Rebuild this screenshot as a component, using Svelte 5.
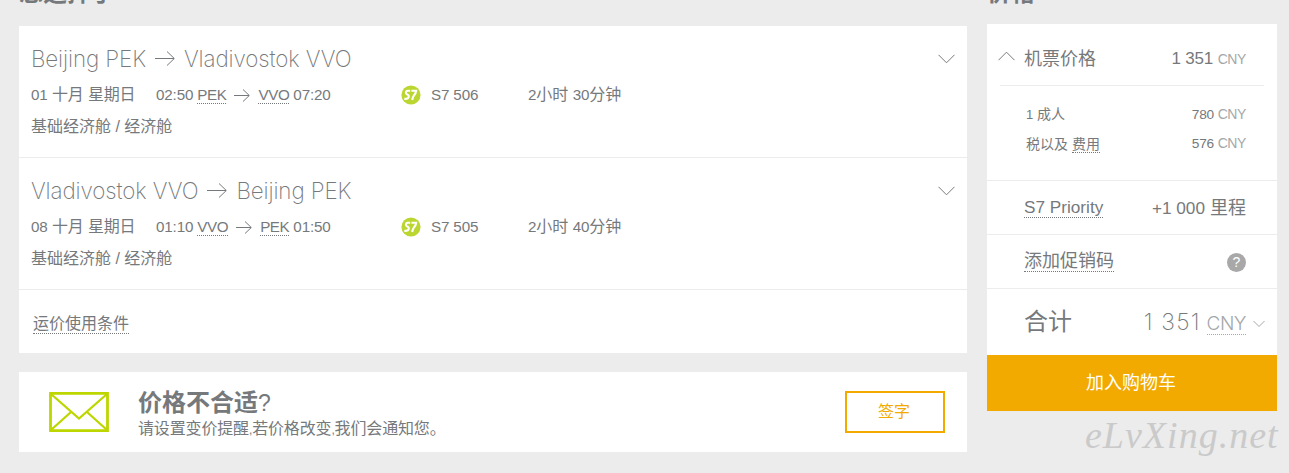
<script lang="ts">
  type Stop = { time: string; code: string };
  type Flight = {
    from: string;
    to: string;
    date: string;
    depart: Stop;
    arrive: Stop;
    number: string;
    duration: [string, string];
  };

  const flights: Flight[] = [
    {
      from: 'Beijing PEK',
      to: 'Vladivostok VVO',
      date: '01',
      depart: { time: '02:50', code: 'PEK' },
      arrive: { time: '07:20', code: 'VVO' },
      number: 'S7 506',
      duration: ['2', '30']
    },
    {
      from: 'Vladivostok VVO',
      to: 'Beijing PEK',
      date: '08',
      depart: { time: '01:10', code: 'VVO' },
      arrive: { time: '01:50', code: 'PEK' },
      number: 'S7 505',
      duration: ['2', '40']
    }
  ];
</script>

{#snippet arrow(w: number, h: number)}
  <svg class="arrow" width={w} height={h} viewBox="0 0 {w} {h}">
    <path d="M0 {h / 2}H{w - 1}M{w - h / 2 - 0.5} 0.5L{w - 0.7} {h / 2}L{w - h / 2 - 0.5} {h - 0.5}" />
  </svg>
{/snippet}

<div class="page">
  <main>
    <h2>您选择了</h2>
    <section class="flights">
      {#each flights as f}
        <article>
          <header>
            <span>{f.from}</span>
            {@render arrow(20, 15)}
            <span>{f.to}</span>
            <svg class="toggle" width="17" height="10" viewBox="0 0 17 10"><path d="M.5 .8L8.5 8.8L16.5 .8" /></svg>
          </header>
          <div class="details">
            <span class="date"><i>{f.date}</i> 十月 星期日</span>
            <span class="times">
              <i>{f.depart.time}</i>
              <abbr>{f.depart.code}</abbr>
              {@render arrow(16, 13)}
              <abbr>{f.arrive.code}</abbr>
              <i>{f.arrive.time}</i>
            </span>
            <svg class="logo" width="20" height="20" viewBox="0 0 20 20">
              <circle cx="10" cy="10" r="9.6" />
              <path d="M9.2 5.8H6.9Q5 5.9 4.9 7.7Q5 9.1 6.8 9.8Q8.2 10.5 7.7 12.1Q7.2 13.8 5 13.9H3.3M10.4 5.8H15.1Q14.9 8.2 13 10.4Q11.6 12.2 11.2 15" />
            </svg>
            <span class="number"><i>{f.number}</i></span>
            <span><i>{f.duration[0]}</i>小时 <i>{f.duration[1]}</i>分钟</span>
          </div>
          <div class="fare">基础经济舱 / 经济舱</div>
        </article>
      {/each}
      <div class="rules"><a>运价使用条件</a></div>
    </section>

    <section class="alert">
      <svg width="60" height="40" viewBox="0 0 60 40">
        <path d="M1.5 1.3H58.5V38.7H1.5Z" />
        <path class="fold" d="M2 2L30 26.5L58 2M2 38L22 20M58 38L38 20" />
      </svg>
      <div class="message">
        <h3>价格不合适<i>?</i></h3>
        <p>请设置变价提醒<i>,</i>若价格改变<i>,</i>我们会通知您。</p>
      </div>
      <button>签字</button>
    </section>
  </main>

  <aside>
    <h2>价格</h2>
    <div class="summary">
      <div class="fares">
        <div class="ticket">
          <svg width="17" height="10" viewBox="0 0 17 10"><path d="M.5 9.2L8.5 1.2L16.5 9.2" /></svg>
          <span>机票价格</span>
          <b>1 351 <em>CNY</em></b>
        </div>
        <div class="line"><span><i>1</i> 成人</span><b>780 <em>CNY</em></b></div>
        <div class="line"><span>税以及 <a>费用</a></span><b>576 <em>CNY</em></b></div>
      </div>
      <div class="row"><a class="latin">S7 Priority</a><span><i>+1 000</i> 里程</span></div>
      <div class="row"><a>添加促销码</a><span class="help">?</span></div>
      <div class="total">
        <span>合计</span>
        <b>1 351</b>
        <a>CNY</a>
        <svg width="12" height="8" viewBox="0 0 12 8"><path d="M.5 1L6 6.5L11.5 1" /></svg>
      </div>
    </div>
    <button class="cart">加入购物车</button>
    <div class="watermark">eLvXing.net</div>
  </aside>
</div>

<style>
  :global(body) {
    background: #ececec;
    overflow: hidden;
  }
  .page {
    display: flex;
    gap: 20px;
    height: 473px;
    padding-left: 19px;
    box-sizing: border-box;
    overflow: hidden;
    color: #76797c;
    font-family: 'Liberation Sans', 'Noto Sans CJK SC', sans-serif;
    font-size: 16px;
    font-weight: 400;
    line-height: 24px;
    white-space: nowrap;
  }
  main {
    width: 948px;
  }
  aside {
    width: 290px;
  }
  h2 {
    height: 30px;
    margin: -22px 0 18px;
    font-size: 24px;
    line-height: 30px;
  }
  aside h2 {
    margin-bottom: 16px;
  }
  h3,
  p {
    margin: 0;
  }
  i,
  em {
    font-style: normal;
  }
  svg {
    flex: none;
    fill: none;
    stroke: #76797c;
    stroke-width: 1;
  }
  a,
  abbr {
    border-bottom: 1px dotted #76797c;
  }
  button {
    font: inherit;
  }

  .flights {
    height: 327px;
    background: #fff;
  }
  article {
    height: 132px;
    padding: 17px 12px 0;
    box-sizing: border-box;
    border-bottom: 1px solid #ececec;
  }
  header {
    display: flex;
    align-items: center;
    gap: 9px;
    height: 31px;
    font-family: Inter, sans-serif;
    font-size: 22.4px;
    font-weight: 250;
    letter-spacing: -0.1px;
  }
  .toggle {
    margin-left: auto;
  }
  .details {
    display: flex;
    align-items: center;
    height: 42px;
  }
  .details i,
  .details abbr {
    font-size: 15.2px;
    letter-spacing: -0.15px;
  }
  .date {
    width: 125px;
    letter-spacing: -0.15px;
  }
  .times {
    display: flex;
    gap: 4px;
    align-items: center;
    width: 245px;
  }
  .times abbr {
    letter-spacing: -0.4px;
    line-height: 17px;
  }
  .times .arrow {
    margin: 0 4px;
  }
  .logo circle {
    fill: #bcd631;
    stroke: none;
  }
  .logo path {
    stroke: #fff;
    stroke-width: 2.1;
  }
  .number {
    width: 97px;
    margin-left: 10px;
  }
  .fare {
    line-height: 22px;
  }
  .rules {
    padding: 22px 14px;
  }
  .rules a {
    display: inline-block;
    line-height: 19px;
  }

  .alert {
    display: flex;
    align-items: center;
    height: 80px;
    margin-top: 19px;
    padding: 0 22px 0 30px;
    box-sizing: border-box;
    background: #fff;
  }
  .alert svg {
    stroke: #bed600;
    stroke-width: 2.8;
  }
  .alert .fold {
    stroke-width: 2.3;
  }
  .message {
    padding-top: 6px;
    margin-left: 29px;
  }
  h3 {
    font-size: 24px;
    line-height: 28px;
  }
  h3 i {
    font-size: 23px;
    font-weight: 400;
  }
  p {
    line-height: 23px;
    letter-spacing: -0.15px;
  }
  p i {
    font-size: 12px;
  }
  .alert button {
    width: 100px;
    height: 42px;
    margin-left: auto;
    padding: 0 2px 0 0;
    border: 2px solid #f3aa00;
    background: #fff;
    color: #f3aa00;
  }

  .summary {
    height: 331px;
    background: #fff;
  }
  .fares {
    height: 157px;
    padding: 0 13px;
    box-sizing: border-box;
    border-bottom: 1px solid #ececec;
  }
  b {
    margin-left: auto;
    font-weight: 400;
  }
  em {
    color: #a5a7a9;
    font-size: 14px;
    letter-spacing: -0.4px;
  }
  .ticket {
    display: flex;
    align-items: center;
    height: 62px;
    margin-bottom: 15px;
    padding: 9px 18px 0 0;
    box-sizing: border-box;
    border-bottom: 1px solid #ececec;
    font-size: 18px;
  }
  .ticket svg {
    margin: -7px 9px 0 -2px;
  }
  .ticket b {
    font-size: 17px;
    letter-spacing: -0.2px;
  }
  .line {
    display: flex;
    align-items: center;
    height: 29px;
    padding: 0 18px 0 26px;
    font-size: 14px;
    line-height: 22px;
  }
  .line b {
    font-size: 13.7px;
    letter-spacing: -0.2px;
  }
  .line span,
  .line b {
    margin-top: -2px;
  }
  .line a {
    display: inline-block;
    line-height: 16px;
  }
  .line i {
    font-size: 13px;
  }
  .row {
    display: flex;
    align-items: center;
    justify-content: space-between;
    height: 54px;
    padding: 1px 31px 0 37px;
    box-sizing: border-box;
    border-bottom: 1px solid #ececec;
    font-size: 18px;
  }
  .row a {
    line-height: 19px;
  }
  .row .latin,
  .row i {
    font-size: 17.2px;
  }
  .help {
    width: 19px;
    height: 19px;
    border-radius: 50%;
    background: #a8a8a8;
    color: #fff;
    font-size: 14px;
    line-height: 19px;
    text-align: center;
  }
  .total {
    display: flex;
    align-items: center;
    height: 66px;
    padding: 0 12px 0 37px;
    font-size: 24px;
  }
  .total b {
    font-family: Inter, sans-serif;
    font-size: 23px;
    font-weight: 250;
    letter-spacing: 1.2px;
  }
  .total a {
    margin: 4px 7px 0 6px;
    border-color: #a5a7a9;
    color: #a5a7a9;
    font-family: Inter, sans-serif;
    font-size: 19px;
    font-weight: 300;
    line-height: 21px;
    letter-spacing: -0.5px;
  }
  .total svg {
    margin-top: 3px;
    stroke: #a5a7a9;
  }
  .cart {
    display: block;
    width: 290px;
    height: 56px;
    padding: 0 2px 0 0;
    border: 0;
    background: #f3aa00;
    color: #fff;
    font-size: 18px;
  }
  .watermark {
    margin: -1px 0 0 98px;
    color: #cacaca;
    font-family: 'Liberation Serif', serif;
    font-size: 38px;
    font-style: italic;
    font-weight: 400;
    line-height: 50px;
    letter-spacing: 1px;
  }
</style>
